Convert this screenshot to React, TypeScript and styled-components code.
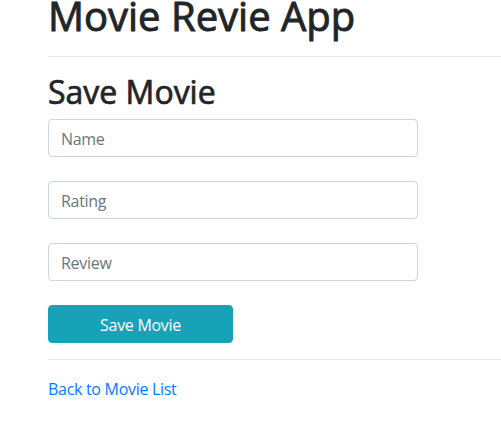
import React from 'react';
import styled, { createGlobalStyle } from 'styled-components';

const GlobalStyle = createGlobalStyle`
  html, body {
    margin: 0;
    padding: 0;
    background: #fff;
    overflow: hidden;
  }
  body {
    font-family: "Open Sans", "Noto Sans", "Liberation Sans", sans-serif;
    font-size: 16px;
    line-height: 1.5;
    color: #212529;
  }
`;

const Page = styled.div`
  width: 560px;
  padding: 0 0 0 48px;
  margin-top: -8px;
`;

const Title = styled.h1`
  margin: 0 0 8px;
  font-size: 40px;
  font-weight: 500;
  line-height: 48px;
  -webkit-text-stroke: 0.9px #212529;
`;

const Rule = styled.hr`
  margin: 16px 0;
  border: 0;
  border-top: 1px solid rgba(0, 0, 0, 0.1);
`;

const Subtitle = styled.h2`
  margin: 0 0 8px;
  font-size: 32px;
  font-weight: 500;
  line-height: 38.4px;
  -webkit-text-stroke: 0.7px #212529;
`;

const Form = styled.form`
  display: flex;
  flex-direction: column;
  gap: 24px;
  width: 370px;
`;

const Field = styled.input`
  box-sizing: border-box;
  height: 38px;
  width: 100%;
  padding: 7px 12px 5px;
  font: inherit;
  letter-spacing: -0.3px;
  color: #495057;
  background: #fff;
  border: 1px solid #ced4da;
  border-radius: 4px;
  outline: none;

  &::placeholder {
    color: #6c757d;
  }
`;

const SaveButton = styled.button`
  box-sizing: border-box;
  width: 185px;
  height: 38px;
  padding: 1px 12px 0;
  font: inherit;
  letter-spacing: -0.3px;
  color: #fff;
  background: #17a2b8;
  border: 1px solid #17a2b8;
  border-radius: 4px;
  cursor: pointer;
`;

const BackLink = styled.a`
  display: inline-block;
  padding-top: 1px;
  color: #007bff;
  letter-spacing: -0.3px;
  text-decoration: none;
`;

export default function App() {
  return (
    <>
      <GlobalStyle />
      <Page>
        <Title>Movie Revie App</Title>
        <Rule />
        <Subtitle>Save Movie</Subtitle>
        <Form onSubmit={(e) => e.preventDefault()}>
          <Field placeholder="Name" />
          <Field placeholder="Rating" />
          <Field placeholder="Review" />
          <SaveButton type="submit">Save Movie</SaveButton>
        </Form>
        <Rule />
        <BackLink href="#">Back to Movie List</BackLink>
      </Page>
    </>
  );
}
